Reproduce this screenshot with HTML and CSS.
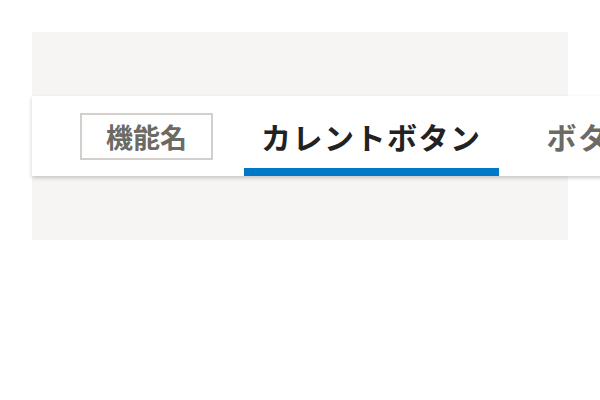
FILE: index.html
```html
<!DOCTYPE html>
<html lang="ja">
<head>
    <meta charset="UTF-8">
    <meta name="viewport" content="width=device-width, initial-scale=1.0">
    <title>ナビゲーション</title>
    <link rel="stylesheet" href="styles.css">
</head>
<body>
    <div class="stage">
        <nav class="nav">
            <div class="nav-label">機能名</div>
            <a class="nav-tab current" href="#">カレントボタン</a>
            <a class="nav-tab" href="#">ボタン</a>
            <a class="nav-tab" href="#">ボタン</a>
        </nav>
    </div>
</body>
</html>
```

FILE: styles.css
```css
* {
    box-sizing: border-box;
    margin: 0;
    padding: 0;
    font-family: "Noto Sans CJK JP", "Noto Sans", sans-serif;
}

html,
body {
    overflow: hidden;
}

body {
    background-color: #ffffff;
    padding: 32px;
    height: 100vh;
}

.stage {
    width: 536px;
    background-color: #f6f5f3;
    padding: 64px 0;
}

.nav {
    display: flex;
    align-items: center;
    width: max-content;
    height: 80px;
    padding-left: 48px;
    background-color: #ffffff;
    box-shadow: 0 2px 4px rgba(0, 0, 0, 0.2);
    gap: 31px;
}

.nav-label {
    border: 2px solid #d3d0cb;
    padding: 0 24px;
    height: 47px;
    display: flex;
    align-items: center;
    font-size: 27px;
    font-weight: 700;
    color: #6b6a64;
}

.nav-tab {
    height: 80px;
    display: flex;
    align-items: center;
    padding: 0 17px;
    font-size: 30px;
    font-weight: 700;
    letter-spacing: 1.5px;
    color: #6b6a64;
    text-decoration: none;
}

.nav-tab.current {
    color: #222222;
    box-shadow: inset 0 -8px 0 #0078c8;
}
```
